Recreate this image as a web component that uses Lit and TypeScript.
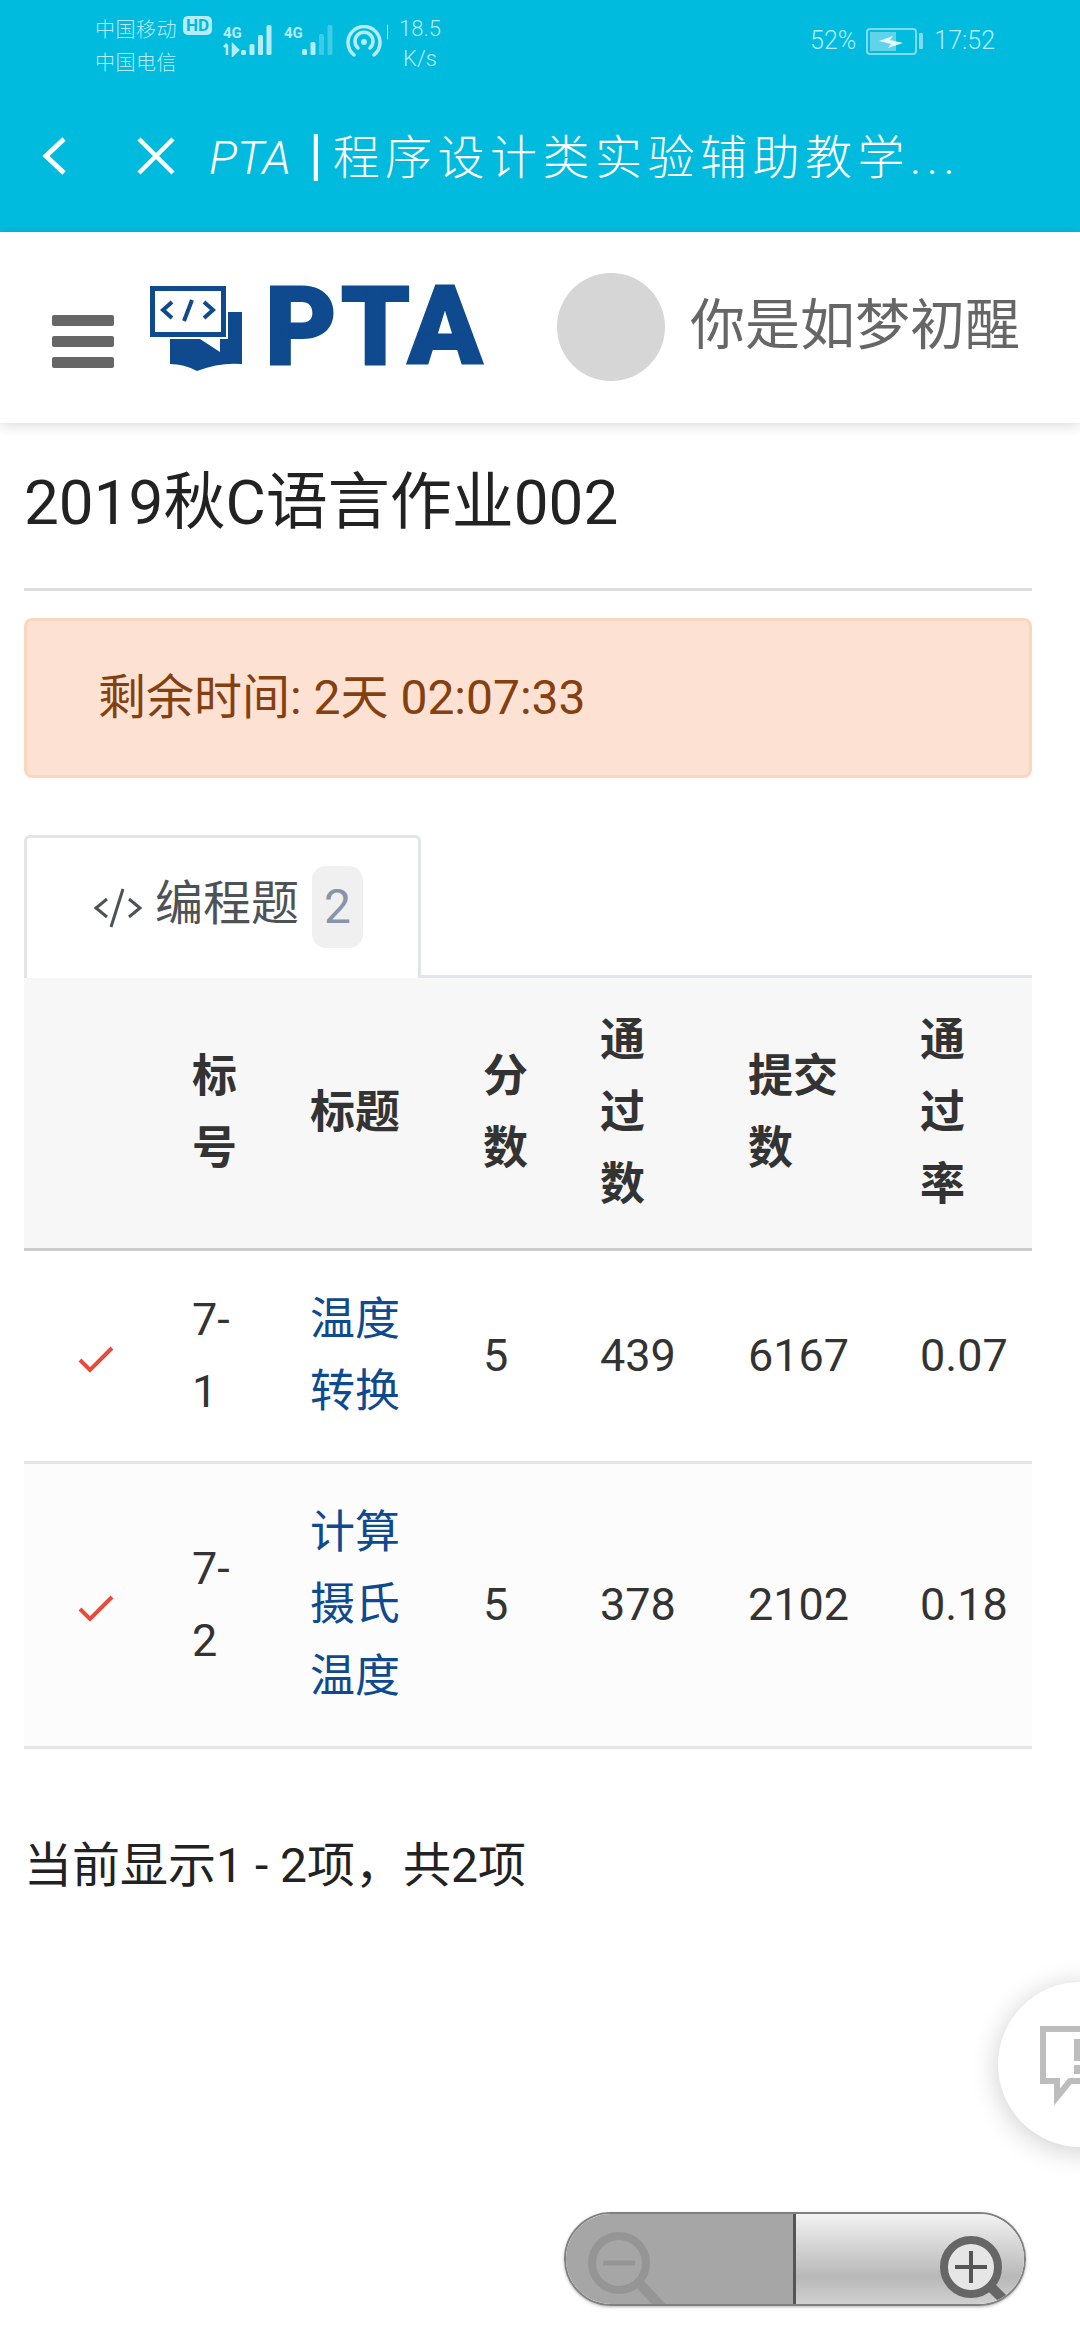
import {LitElement, css, html, svg} from 'lit';
import {customElement} from 'lit/decorators.js';

interface Problem {
	id: string;
	title: string;
	score: number;
	passed: number;
	submitted: number;
	rate: string;
}

const problems: Problem[] = [
	{id: '7-1', title: '温度转换', score: 5, passed: 439, submitted: 6167, rate: '0.07'},
	{id: '7-2', title: '计算摄氏温度', score: 5, passed: 378, submitted: 2102, rate: '0.18'},
];

// x offset, bar heights, how many of the last bars are dimmed
const bars = (x: number, heights: number[], dim = 0) => svg`
	${heights.map((h, i) => svg`<rect x=${x + i * 8.5} y=${30 - h} width="5" height=${h} rx="1.5"
		fill="#b5ecf7" opacity=${i >= heights.length - dim ? 0.35 : 1}></rect>`)}
`;

@customElement('app-root')
export class AppRoot extends LitElement {
	render() {
		return html`
			<div class="topbar">
				${this.renderStatus()}
				<div class="navbar">
					<svg class="back" viewBox="0 0 30 40" width="30" height="40">
						<path d="M25 3 L7 20 L25 37" fill="none" stroke="#fff" stroke-width="5"></path>
					</svg>
					<svg class="close" viewBox="0 0 38 38" width="38" height="38">
						<path d="M2 2 L36 36 M36 2 L2 36" fill="none" stroke="#fff" stroke-width="4.5"></path>
					</svg>
					<span class="nav-title"><i>PTA</i><b>|</b>程序设计类实验辅助教学...</span>
				</div>
			</div>

			<header class="site-head">
				<div class="burger"><span></span><span></span><span></span></div>
				<div class="logo">
					<svg viewBox="0 0 94 86" width="94" height="86">
						<path d="M20 26 H92 V78 Q70 76 47 85 Q34 78 20 78 Z" fill="#0f4a8f"></path>
						<path d="M-2 -2 H78 V53 H70 V66 L50 53 H-2 Z" fill="#fff"></path>
						<path d="M0 0 H76 V51 H0 Z M5 5 V46 H71 V5 Z" fill="#0f4a8f" fill-rule="evenodd"></path>
						<path d="M22 16 L13 24 L22 32 M54 16 L63 24 L54 32 M42 14 L34 35" fill="none" stroke="#0f4a8f" stroke-width="4"></path>
					</svg>
					<span class="logo-text">PTA</span>
				</div>
				<div class="avatar"></div>
				<span class="user-name">你是如梦初醒</span>
			</header>

			<main>
				<h1>2019秋C语言作业002</h1>
				<div class="alert">剩余时间: 2天 02:07:33</div>

				<div class="tabs">
					<div class="tab">
						<svg viewBox="0 0 50 42" width="50" height="42">
							<path d="M14 12 L3 21 L14 30 M36 12 L47 21 L36 30 M30 2 L18 40" fill="none" stroke="#4d5257" stroke-width="3"></path>
						</svg>
						<span>编程题</span>
						<span class="badge">2</span>
					</div>
				</div>

				<table>
					<colgroup>
						<col class="c-state" /><col class="c-id" /><col class="c-title" /><col class="c-score" />
						<col class="c-passed" /><col class="c-sub" /><col class="c-rate" />
					</colgroup>
					<thead>
						<tr>
							<th></th>
							<th>标号</th>
							<th>标题</th>
							<th>分数</th>
							<th>通<br />过<br />数</th>
							<th>提交数</th>
							<th>通过率</th>
						</tr>
					</thead>
					<tbody>
						${problems.map(
							(p) => html`
								<tr>
									<td class="state">
										<svg viewBox="0 0 36 28" width="36" height="28">
											<path d="M2 14 L12 24 L34 2" fill="none" stroke="#e84a3c" stroke-width="4"></path>
										</svg>
									</td>
									<td>${p.id.slice(0, 2)}<br />${p.id.slice(2)}</td>
									<td><a>${p.title}</a></td>
									<td>${p.score}</td>
									<td>${p.passed}</td>
									<td>${p.submitted}</td>
									<td>${p.rate}</td>
								</tr>
							`,
						)}
					</tbody>
				</table>

				<p class="summary">当前显示1 - 2项，共2项</p>
			</main>

			<div class="feedback">
				<svg viewBox="0 0 60 80" width="60" height="80">
					<path d="M3 3 H57 V55 H30 L17 71 V55 H3 Z" fill="none" stroke="#bdbdbd" stroke-width="6"></path>
					<rect x="34" y="13" width="10" height="22" fill="#bdbdbd"></rect>
					<rect x="34" y="39" width="10" height="9" fill="#bdbdbd"></rect>
				</svg>
			</div>

			<div class="zoom-ctl">
				<div class="zoom-out">
					<svg viewBox="0 0 90 90" width="90" height="90">
						<circle cx="33" cy="33" r="27" fill="none" stroke="#959595" stroke-width="8"></circle>
						<path d="M17 33 H49" stroke="#959595" stroke-width="5"></path>
						<path d="M53 53 L82 84" stroke="#959595" stroke-width="10"></path>
					</svg>
				</div>
				<div class="zoom-in">
					<svg viewBox="0 0 90 90" width="90" height="90">
						<circle cx="43" cy="37" r="27" fill="#e6e6e6" stroke="#666" stroke-width="8"></circle>
						<path d="M27 37 H59 M43 21 V53" stroke="#555" stroke-width="4"></path>
						<path d="M63 57 L84 78" stroke="#666" stroke-width="10"></path>
					</svg>
				</div>
			</div>
		`;
	}

	private renderStatus() {
		return html`
			<div class="status">
				<div class="carriers">
					<span>中国移动</span>
					<span>中国电信</span>
				</div>
				<span class="hd">HD</span>
				<svg class="signals" viewBox="0 0 112 32" width="112" height="32">
					<text x="0" y="13" class="g">4G</text>
					<path d="M4 20 V30 M1 22 L4 19 M10 20 L15 25 L10 30 Z" stroke="#b5ecf7" stroke-width="2.5" fill="#b5ecf7"></path>
					${bars(18, [5, 11, 20, 30])}
					<text x="61" y="13" class="g">4G</text>
					${bars(79, [6, 13, 21, 30], 2)}
				</svg>
				<svg class="wifi" viewBox="0 0 36 32" width="36" height="32">
					<path d="M8 30 A16 16 0 1 1 28 30" fill="none" stroke="#b5ecf7" stroke-width="3.5" stroke-linecap="round"></path>
					<path d="M12 23 A9 9 0 1 1 24 23" fill="none" stroke="#b5ecf7" stroke-width="3.5" stroke-linecap="round"></path>
					<circle cx="18" cy="17" r="3" fill="#b5ecf7"></circle>
				</svg>
				<div class="tick"></div>
				<div class="speed"><span>18.5</span><span>K/s</span></div>
				<div class="status-right">
					<span>52%</span>
					<div class="battery">
						<div class="charge"></div>
						<svg viewBox="0 0 24 14" width="24" height="14">
							<path d="M0 6 L14 1 L11 5 L24 8 L9 13 L12 9 Z" fill="#e6fafd"></path>
						</svg>
					</div>
					<div class="nub"></div>
					<span class="clock">17:52</span>
				</div>
			</div>
		`;
	}

	static styles = css`
		:host {
			display: block;
			position: relative;
			height: 2340px;
			overflow: hidden;
			background: #fff;
			color: #333;
			font: 45px/72px Roboto, 'Noto Sans CJK SC', sans-serif;
		}

		.topbar {
			height: 232px;
			background: #00bbde;
			color: #fff;
		}

		.status {
			height: 80px;
			box-sizing: border-box;
			padding: 14px 85px 0 95px;
			display: flex;
			align-items: flex-start;
			color: #b5ecf7;
			font-size: 20px;
			line-height: 33px;
		}

		.carriers {
			display: flex;
			flex-direction: column;
			width: 88px;
			letter-spacing: 0.5px;
			font-weight: 300;
		}

		.hd {
			margin-top: 2px;
			width: 29px;
			height: 19px;
			border-radius: 5px;
			background: #b5ecf7;
			color: #00bbde;
			font: 700 17px/19px Roboto, sans-serif;
			text-align: center;
		}

		.signals {
			margin: 11px 0 0 11px;
			flex: none;
		}

		.g {
			fill: #b5ecf7;
			font: 700 15px Roboto, sans-serif;
		}

		.wifi {
			margin: 11px 0 0 11px;
			flex: none;
		}

		.tick {
			margin: 11px 0 0 5px;
			width: 1px;
			height: 14px;
			background: #b5ecf7;
		}

		.speed {
			display: flex;
			flex-direction: column;
			align-items: center;
			margin-left: 11px;
			width: 42px;
			font: 300 22px/30px Roboto, sans-serif;
		}

		.status-right {
			margin-left: auto;
			margin-top: 13px;
			display: flex;
			align-items: center;
			font: 300 25px/28px Roboto, sans-serif;
		}

		.battery {
			position: relative;
			margin-left: 10px;
			width: 51px;
			height: 27px;
			box-sizing: border-box;
			padding: 2px;
			border: 2px solid #7ddcef;
			border-radius: 4px;
		}

		.charge {
			width: 26px;
			height: 100%;
			background: #5fd3ea;
		}

		.battery svg {
			position: absolute;
			left: 11px;
			top: 5px;
		}

		.nub {
			margin-left: 2px;
			width: 4px;
			height: 16px;
			border-radius: 1px;
			background: #7ddcef;
		}

		.clock {
			margin-left: 11px;
		}

		.navbar {
			height: 152px;
			box-sizing: border-box;
			padding: 0 0 0 39px;
			display: flex;
			align-items: center;
		}

		.close {
			margin-left: 68px;
		}

		.nav-title {
			margin-left: 34px;
			font-size: 47px;
			font-weight: 300;
			letter-spacing: 5.5px;
			white-space: nowrap;
		}

		.nav-title i {
			font-family: Roboto, sans-serif;
			font-weight: 300;
			letter-spacing: 0;
		}

		.nav-title b {
			margin: 0 10px 0 18px;
			font-family: Roboto, sans-serif;
			font-weight: 400;
			font-size: 56px;
			letter-spacing: 0;
		}

		.site-head {
			height: 191px;
			display: flex;
			align-items: flex-start;
			background: #fff;
			box-shadow: 0 3px 12px rgba(0, 0, 0, 0.14);
			position: relative;
		}

		.burger {
			margin: 83px 0 0 52px;
			width: 62px;
			display: flex;
			flex-direction: column;
			gap: 10px;
		}

		.burger span {
			height: 11px;
			border-radius: 2px;
			background: #666;
		}

		.logo {
			margin: 54px 0 0 36px;
			width: 333px;
			display: flex;
			align-items: flex-start;
		}

		.logo svg {
			flex: none;
			overflow: visible;
		}

		.logo-text {
			margin: -14px 0 0 21px;
			font: 900 110px/110px Roboto, sans-serif;
			color: #0f4a8f;
			letter-spacing: 4px;
			-webkit-text-stroke: 2px #0f4a8f;
		}

		.avatar {
			margin: 41px 0 0 74px;
			width: 108px;
			height: 108px;
			border-radius: 50%;
			background: #d6d6d6;
			flex: none;
		}

		.user-name {
			margin: 58px 0 0 25px;
			font-size: 55px;
			line-height: 70px;
			color: #666;
			white-space: nowrap;
		}

		main {
			width: 1008px;
			margin-left: 24px;
		}

		h1 {
			margin: 0;
			height: 168px;
			box-sizing: border-box;
			padding-top: 41px;
			border-bottom: 3px solid #ddd;
			font-size: 62px;
			line-height: 78px;
			font-weight: 400;
			color: #222;
		}

		.alert {
			margin-top: 27px;
			height: 160px;
			box-sizing: border-box;
			padding: 41px 71px;
			border: 3px solid #fcd5c1;
			border-radius: 8px;
			background: #fde2d4;
			color: #85400f;
			font-size: 48px;
		}

		.tabs {
			margin-top: 57px;
			height: 143px;
			box-sizing: border-box;
			border-bottom: 3px solid #e1e4e8;
		}

		.tab {
			width: 397px;
			height: 143px;
			box-sizing: border-box;
			padding: 28px 0 0 66px;
			border: 3px solid #e1e4e8;
			border-bottom: none;
			border-radius: 6px 6px 0 0;
			background: #fff;
			display: flex;
			align-items: flex-start;
			color: #4d5257;
			font-size: 48px;
		}

		.tab svg {
			margin-top: 21px;
		}

		.tab > span:first-of-type {
			margin: 0 0 0 12px;
			line-height: 76px;
		}

		.badge {
			margin-left: 13px;
			width: 51px;
			height: 82px;
			border-radius: 14px;
			background: #f0f0f0;
			color: #8a94a8;
			font-size: 48px;
			line-height: 82px;
			text-align: center;
		}

		table {
			width: 1008px;
			table-layout: fixed;
			border-collapse: collapse;
		}

		.c-state { width: 144px; }
		.c-id { width: 118px; }
		.c-title { width: 173px; }
		.c-score { width: 117px; }
		.c-passed { width: 148px; }
		.c-sub { width: 172px; }
		.c-rate { width: 136px; }

		th,
		td {
			padding: 0 24px;
			text-align: left;
			vertical-align: middle;
		}

		th {
			padding-top: 27px;
			padding-bottom: 27px;
			background: #f7f7f7;
			border-bottom: 3px solid #ccc;
			font-weight: 700;
		}

		td {
			padding-top: 33px;
			padding-bottom: 33px;
			border-bottom: 3px solid #e5e5e5;
		}

		tbody tr:nth-child(even) td {
			background: #fcfcfc;
		}

		td.state {
			padding-left: 54px;
			padding-right: 0;
		}

		td.state svg {
			display: block;
			margin-top: 8px;
		}

		a {
			color: #0f4a8f;
		}

		.summary {
			margin: 81px 0 0 0;
			color: #222;
			font-size: 48px;
		}

		.feedback {
			position: absolute;
			left: 998px;
			top: 1982px;
			width: 165px;
			height: 165px;
			border-radius: 50%;
			background: #fff;
			box-shadow: 0 4px 28px rgba(0, 0, 0, 0.2);
		}

		.feedback svg {
			position: absolute;
			left: 42px;
			top: 44px;
		}

		.zoom-ctl {
			position: absolute;
			left: 564px;
			top: 2212px;
			width: 462px;
			height: 94px;
			display: flex;
			overflow: hidden;
			box-sizing: border-box;
			border: 2px solid #808080;
			border-radius: 47px;
			box-shadow: 0 1px 3px rgba(0, 0, 0, 0.3);
		}

		.zoom-out {
			width: 230px;
			box-sizing: border-box;
			padding: 16px 0 0 20px;
			background: #a6a6a6;
			border-right: 3px solid #555;
		}

		.zoom-in {
			flex: 1;
			box-sizing: border-box;
			padding: 16px 0 0 132px;
			background: linear-gradient(#f2f2f2, #b8b8b8 70%, #d0d0d0);
		}
	`;
}

declare global {
	interface HTMLElementTagNameMap {
		'app-root': AppRoot;
	}
}
